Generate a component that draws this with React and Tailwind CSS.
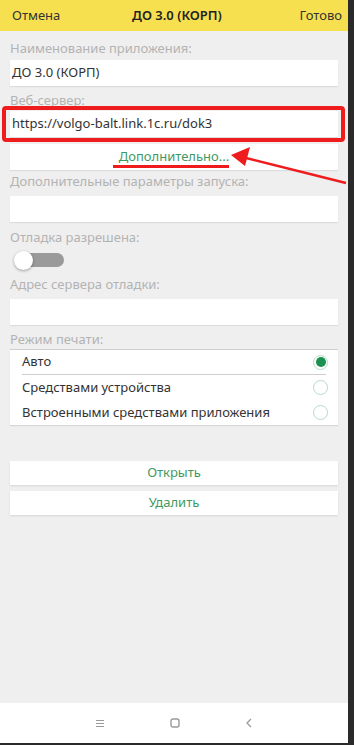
import React from 'react';

const font = { fontFamily: '"Noto Sans", "Open Sans", sans-serif' };

function Label({ children, className = '' }) {
  return <div className={`px-[10px] text-[13px] leading-[16px] text-[#b3b3b3] ${className}`}>{children}</div>;
}

function Field({ value, className = '' }) {
  return (
    <div className={`mx-[10px] h-[26px] bg-white shadow-[0_1px_1px_rgba(0,0,0,0.08)] flex items-center px-[2px] text-[13px] text-[#333] ${className}`}>
      {value}
    </div>
  );
}

function Radio({ checked }) {
  return (
    <div className="w-[15px] h-[15px] rounded-full border border-[#b7dcc4] flex items-center justify-center">
      {checked && <div className="w-[10px] h-[10px] rounded-full bg-[#1a9150]" />}
    </div>
  );
}

export default function App() {
  return (
    <div className="w-[354px] h-[745px] flex flex-col bg-[#2a2a2a] overflow-hidden" style={font}>
      <div className="flex flex-1">
        <div className="w-[348px] flex flex-col bg-[#efefef] relative">
          {/* Header */}
          <div className="h-[31px] bg-[#f6e04f] flex items-center justify-between px-[12px] text-[13px] text-[#333]">
            <span>Отмена</span>
            <span className="font-semibold text-[#222] -ml-[6px]">ДО 3.0 (КОРП)</span>
            <span className="-mr-[6px]">Готово</span>
          </div>

          <Label className="mt-[9px]">Наименование приложения:</Label>
          <Field value="ДО 3.0 (КОРП)" className="mt-[4px]" />
          <Label className="mt-[6px]">Веб-сервер:</Label>
          <Field value="https://volgo-balt.link.1c.ru/dok3" className="mt-[3px] h-[25px] text-[12.5px]" />

          <div className="mx-[10px] mt-[7px] h-[26px] bg-white flex items-center justify-center text-[13px] text-[#3f9a62] shadow-[0_1px_1px_rgba(0,0,0,0.08)]">
            Дополнительно...
          </div>

          <Label className="mt-[3px]">Дополнительные параметры запуска:</Label>
          <Field value="" className="mt-[7px] h-[25px]" />

          <Label className="mt-[7px]">Отладка разрешена:</Label>
          <div className="mt-[5px] ml-[14px] h-[20px] flex items-center relative">
            <div className="ml-[3px] w-[47px] h-[14px] rounded-full bg-[#9a9a9a]" />
            <div className="absolute left-0 top-[1px] w-[19px] h-[19px] rounded-full bg-white shadow-[0_1px_3px_rgba(0,0,0,0.35)]" />
          </div>

          <Label className="mt-[6px]">Адрес сервера отладки:</Label>
          <Field value="" className="mt-[7px] h-[24px]" />

          <Label className="mt-[6px]">Режим печати:</Label>
          <div className="mx-[10px] mt-[2px] bg-white border-t border-[#cfcfcf] shadow-[0_1px_1px_rgba(0,0,0,0.1)] text-[13px] text-[#333]">
            <div className="mx-[12px] h-[25px] flex items-center justify-between border-b border-[#cfcfcf]">
              <span>Авто</span>
              <div className="-mr-[2px]"><Radio checked /></div>
            </div>
            <div className="mx-[12px] h-[25px] flex items-center justify-between">
              <span>Средствами устройства</span>
              <div className="-mr-[2px]"><Radio /></div>
            </div>
            <div className="mx-[12px] h-[25px] flex items-center justify-between">
              <span>Встроенными средствами приложения</span>
              <div className="-mr-[2px]"><Radio /></div>
            </div>
          </div>

          <div className="mx-[10px] mt-[36px] h-[24px] bg-white flex items-center justify-center text-[13px] text-[#3f9a62] shadow-[0_1px_2px_rgba(0,0,0,0.1)]">
            Открыть
          </div>
          <div className="mx-[10px] mt-[6px] h-[24px] bg-white flex items-center justify-center text-[13px] text-[#3f9a62] shadow-[0_1px_2px_rgba(0,0,0,0.1)]">
            Удалить
          </div>

          <div className="flex-1" />

          {/* Nav bar */}
          <div className="h-[40px] bg-white flex items-center justify-center gap-[65px] text-[#9a9a9a]">
            <svg width="10" height="9" viewBox="0 0 10 9"><path d="M1 1.5h8M1 4.5h8M1 7.5h8" stroke="currentColor" strokeWidth="1.2" /></svg>
            <svg width="10" height="10" viewBox="0 0 10 10"><rect x="1" y="1" width="8" height="8" rx="2" fill="none" stroke="currentColor" strokeWidth="1.4" /></svg>
            <svg width="8" height="10" viewBox="0 0 8 10"><path d="M6 1L2 5l4 4" fill="none" stroke="currentColor" strokeWidth="1.3" /></svg>
          </div>

          {/* Annotations */}
          <div className="absolute left-[2px] top-[106px] w-[343px] h-[36px] border-[4px] border-[#ee1c1c] rounded-[4px]" />
          <div className="absolute left-[113px] top-[165px] w-[116px] h-[3px] bg-[#ee1c1c]" />
          <svg className="absolute left-[228px] top-[145px]" width="122" height="42" viewBox="0 0 122 42">
            <line x1="118" y1="38" x2="14" y2="12" stroke="#ee1c1c" strokeWidth="2.5" />
            <polygon points="3,10 22,2 17,21" fill="#ee1c1c" />
          </svg>
        </div>
        <div className="w-[6px] bg-[#2a2a2a]" />
      </div>
      <div className="h-[2px]" />
    </div>
  );
}
